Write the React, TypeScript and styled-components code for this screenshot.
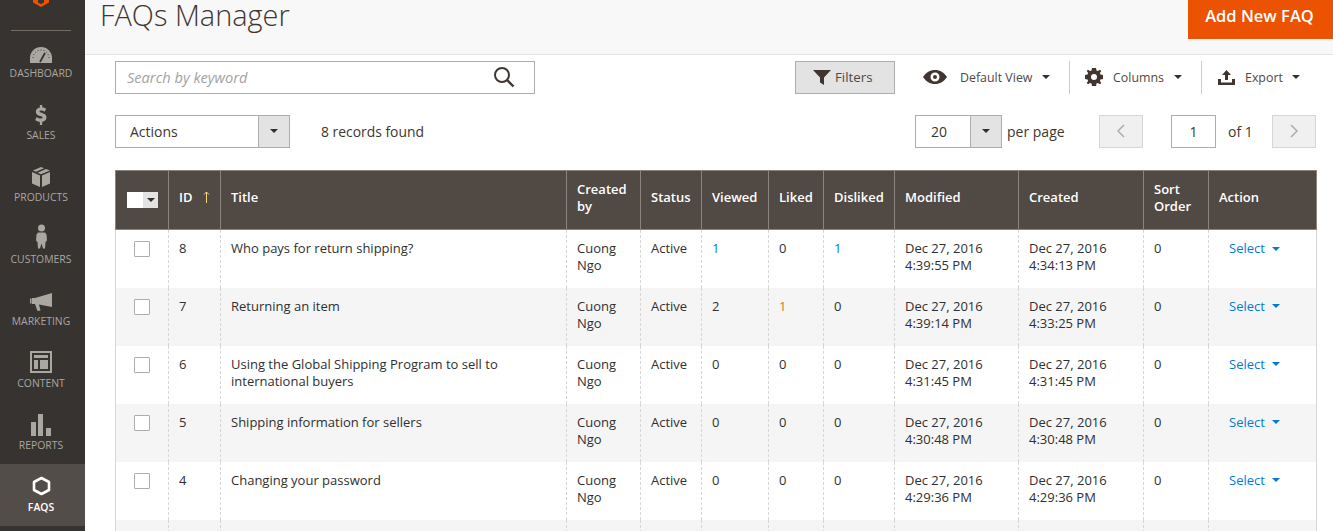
import React from 'react'
import styled, { createGlobalStyle } from 'styled-components'

const GlobalStyle = createGlobalStyle`
  html, body { margin: 0; padding: 0; background: #fff; }
  body { font-family: "Open Sans", "Noto Sans", sans-serif; font-size: 13px; color: #303030; }
  * { box-sizing: border-box; }
`

const Page = styled.div`
  display: flex;
  width: 1333px;
  height: 531px;
  overflow: hidden;
`

const Sidebar = styled.nav`
  width: 85px;
  flex: none;
  background: #373330;
  display: flex;
  flex-direction: column;
  align-items: center;
  overflow: hidden;
`

const LogoWrap = styled.div`
  height: 30px;
  width: 100%;
  flex: none;
  padding-right: 3px;
  display: flex;
  justify-content: center;
  align-items: flex-start;
`

const SideRule = styled.div`
  width: 60px;
  height: 1px;
  flex: none;
  background: #736d66;
  margin: 0 3px -1px 0;
`

const NavItem = styled.a<{ $active?: boolean }>`
  width: 100%;
  height: 62px;
  flex: none;
  display: flex;
  flex-direction: column;
  align-items: center;
  justify-content: flex-start;
  padding: 9px 3px 0 0;
  background: ${p => (p.$active ? '#524d49' : 'transparent')};
  color: ${p => (p.$active ? '#ffffff' : '#aaa6a0')};
  font-size: 10.4px;
  line-height: 14px;
  font-weight: ${p => (p.$active ? 600 : 400)};
  text-transform: uppercase;
  svg { height: 24px; width: 28px; display: block; margin-bottom: 3px; overflow: visible; }
`

const Main = styled.main`
  flex: 1;
  min-width: 0;
  display: flex;
  flex-direction: column;
`

const Header = styled.header`
  height: 55px;
  flex: none;
  background: #f8f8f8;
  border-bottom: 1px solid #e3e3e3;
  display: flex;
  justify-content: space-between;
  align-items: flex-start;
  padding-left: 15px;
`

const Title = styled.h1`
  margin: 0;
  font-size: 28.9px;
  line-height: 30px;
  font-weight: 300;
  color: #41362f;
`

const AddButton = styled.button`
  width: 145px;
  height: 39px;
  border: 0;
  background: #eb5202;
  color: #fff;
  font-family: inherit;
  font-size: 16.5px;
  font-weight: 600;
  padding: 0 2px 8px 0;
`

const Content = styled.div`
  padding: 5px 17px 0 30px;
`

const ToolRow = styled.div`
  display: flex;
  align-items: center;
  height: 34px;
`

const SearchBox = styled.div`
  width: 420px;
  height: 33px;
  border: 1px solid #adadad;
  display: flex;
  align-items: center;
  justify-content: space-between;
  padding: 0 19px 0 11px;
  font-style: italic;
  font-size: 14.6px;
  color: #a3a3a3;
`

const FiltersButton = styled.div`
  margin-left: 260px;
  width: 100px;
  height: 33px;
  background: #e3e3e3;
  border: 1px solid #adadad;
  display: flex;
  align-items: center;
  gap: 4px;
  padding-left: 17px;
  color: #514943;
  font-size: 13.3px;
`

const ToolMenu = styled.div<{ $width: number; $divider?: boolean }>`
  width: ${p => p.$width}px;
  height: 33px;
  flex: none;
  display: flex;
  align-items: center;
  font-size: 12.4px;
  color: #514943;
  border-left: ${p => (p.$divider ? '1px solid #cccccc' : '0')};
`

const MenuIcon = styled.svg<{ $left: number }>`
  margin-left: ${p => p.$left}px;
  flex: none;
`

const MenuLabel = styled.span<{ $left: number; $right: number }>`
  margin-left: ${p => p.$left}px;
  margin-right: ${p => p.$right}px;
`

const Caret = styled.span<{ $color?: string; $size?: number }>`
  display: inline-block;
  width: 0;
  height: 0;
  flex: none;
  border-left: ${p => p.$size ?? 4}px solid transparent;
  border-right: ${p => p.$size ?? 4}px solid transparent;
  border-top: ${p => p.$size ?? 4}px solid ${p => p.$color ?? '#303030'};
`

const PagerRow = styled.div`
  display: flex;
  align-items: center;
  height: 34px;
  margin-top: 20px;
`

const Select = styled.div<{ $width: number; $arrow: number }>`
  width: ${p => p.$width}px;
  height: 33px;
  flex: none;
  border: 1px solid #adadad;
  display: grid;
  grid-template-columns: 1fr ${p => p.$arrow}px;
  align-items: stretch;
  font-size: 14px;
  color: #41362f;
`

const SelectValue = styled.span<{ $pad: number }>`
  padding-left: ${p => p.$pad}px;
  line-height: 31px;
`

const SelectArrow = styled.span`
  background: #e3e3e3;
  border-left: 1px solid #adadad;
  display: flex;
  align-items: center;
  justify-content: center;
`

const Records = styled.span`
  margin-left: 31px;
  width: 594px;
  font-size: 13.9px;
  color: #41362f;
`

const PerPage = styled.span`
  margin-left: 5px;
  width: 92px;
  font-size: 14px;
  color: #41362f;
`

const PageArrow = styled.div`
  width: 44px;
  height: 33px;
  flex: none;
  background: #f0f0f0;
  border: 1px solid #d6d6d6;
  display: flex;
  align-items: center;
  justify-content: center;
  svg { width: 10px; height: 16px; }
`

const PageInput = styled.div`
  margin-left: 28px;
  width: 45px;
  height: 33px;
  flex: none;
  border: 1px solid #adadad;
  text-align: center;
  line-height: 31px;
  font-size: 14px;
  color: #41362f;
`

const PageOf = styled.span`
  margin-left: 12px;
  width: 44px;
  font-size: 14px;
  color: #41362f;
`

const Grid = styled.table`
  margin-top: 22px;
  width: 1201px;
  table-layout: fixed;
  border-collapse: collapse;
  font-size: 13px;
  line-height: 17px;
  border-left: 1px solid #d6d6d6;
  border-right: 1px solid #d6d6d6;
`

const Th = styled.th`
  height: 59px;
  background: #514943;
  color: #fff;
  font-size: 13px;
  font-weight: 600;
  text-align: left;
  vertical-align: middle;
  padding: 0 10px 5px;
  border: 1px solid #8a837e;
`

const Row = styled.tr<{ $odd: boolean }>`
  background: ${p => (p.$odd ? '#f5f5f5' : '#ffffff')};
`

const Td = styled.td<{ $tone?: 'blue' | 'orange' }>`
  height: 58px;
  padding: 10px 10px 0;
  vertical-align: top;
  border-left: 1px dashed #d6d6d6;
  color: ${p => (p.$tone === 'blue' ? '#007bdb' : p.$tone === 'orange' ? '#d87a1a' : '#303030')};
`

const CheckCell = styled(Td)`
  padding: 11px 0 0 18px;
`

const Check = styled.span`
  display: block;
  width: 16px;
  height: 16px;
  background: #fff;
  border: 1px solid #adadad;
  border-radius: 1px;
`

const HeadCheck = styled.div`
  display: flex;
  width: 31px;
  height: 16px;
  margin: 4px 0 0 1px;
`

const HeadCheckBox = styled.span`
  width: 16px;
  background: #fff;
`

const HeadCheckArrow = styled.span`
  flex: 1;
  background: #e3e3e3;
  display: flex;
  align-items: center;
  justify-content: center;
`

const SortMark = styled.svg`
  margin-left: 10px;
  vertical-align: -1px;
`

const SelectLink = styled.a`
  color: #007bdb;
  display: inline-flex;
  align-items: center;
  gap: 7px;
  margin-left: 10px;
`

const columns = [53, 52, 346, 74, 61, 67, 55, 71, 124, 125, 65, 108]

type Faq = {
  id: number
  title: string
  viewed: number
  liked: number
  disliked: number
  modified: string
  created: string
}

const rows: Faq[] = [
  { id: 8, title: 'Who pays for return shipping?', viewed: 1, liked: 0, disliked: 1, modified: '4:39:55 PM', created: '4:34:13 PM' },
  { id: 7, title: 'Returning an item', viewed: 2, liked: 1, disliked: 0, modified: '4:39:14 PM', created: '4:33:25 PM' },
  { id: 6, title: 'Using the Global Shipping Program to sell to international buyers', viewed: 0, liked: 0, disliked: 0, modified: '4:31:45 PM', created: '4:31:45 PM' },
  { id: 5, title: 'Shipping information for sellers', viewed: 0, liked: 0, disliked: 0, modified: '4:30:48 PM', created: '4:30:48 PM' },
  { id: 4, title: 'Changing your password', viewed: 0, liked: 0, disliked: 0, modified: '4:29:36 PM', created: '4:29:36 PM' },
]

const navItems = [
  {
    label: 'Dashboard',
    icon: (
      <svg viewBox="0 0 28 24">
        <path fill="currentColor" d="M3 24v-5a11 11 0 0122 0v5z" />
        <path stroke="#373330" strokeWidth="1.800" d="M13 23l5-9" />
        <path stroke="#373330" strokeWidth="1" strokeDasharray="1 2" fill="none" d="M6 19a8 8 0 0116 0" />
      </svg>
    ),
  },
  {
    label: 'Sales',
    icon: (
      <svg viewBox="0 0 28 24">
        <g transform="translate(3.100 4) scale(.78 .83)">
          <path fill="currentColor" d="M12.500 0h3v2.700c2 .2 3.600.8 5 1.700l-1.700 3.700c-1.500-1-3-1.500-4.700-1.500-1.300 0-2 .4-2 1.100 0 .8.900 1.100 3.300 1.800 3.600 1 5.600 2.400 5.600 5.400 0 2.900-1.900 4.800-5.500 5.300V24h-3v-3.700c-2.400-.2-4.400-1-6-2.300l2-3.600c1.700 1.300 3.600 2 5.300 2 1.400 0 2.200-.4 2.200-1.200s-.8-1.200-3-1.800c-3.700-1-5.700-2.300-5.700-5.300 0-2.800 2-4.700 5.200-5.200z" />
        </g>
      </svg>
    ),
  },
  {
    label: 'Products',
    icon: (
      <svg viewBox="0 0 28 24">
        <path fill="currentColor" d="M5 9l8 3.500V24l-8-3.500zM15 12.500L23 9v11.500L15 24zM14 4l3 1.200-8 3.500-3-1.300zM19 6l4 1.500-9 3.700-3.500-1.400z" />
      </svg>
    ),
  },
  {
    label: 'Customers',
    icon: (
      <svg viewBox="0 0 28 24">
        <circle cx="14.500" cy="3" r="3.500" fill="currentColor" />
        <path fill="currentColor" d="M11 7.500h7l1.500 2 .5 6-1.500 1.500-.5 6.500h-2l-1.500-5-1.500 5h-2l-.5-6.500L9 15.500l.5-6z" />
      </svg>
    ),
  },
  {
    label: 'Marketing',
    icon: (
      <svg viewBox="0 0 28 24">
        <path fill="currentColor" d="M25 6v14L12 17.500l1.500 6-3 .5-2.500-7H5V11h3zM3 11.500h1.500v5H3z" />
      </svg>
    ),
  },
  {
    label: 'Content',
    icon: (
      <svg viewBox="0 0 28 24">
        <path fill="currentColor" fillRule="evenodd" d="M3 2h22v22H3zM5 4v18h18V4zM7 6h14v3H7zM7 11h4v9H7zM13 11h8v9h-8z" />
      </svg>
    ),
  },
  {
    label: 'Reports',
    icon: (
      <svg viewBox="0 0 28 24">
        <path fill="currentColor" d="M4 11h5v14H4zM11 3h5v22h-5zM19 17h5v8h-5z" />
      </svg>
    ),
  },
]

function App() {
  return (
    <Page>
      <GlobalStyle />
      <Sidebar>
        <LogoWrap>
          <svg width="16" height="7" viewBox="0 0 16 7">
            <path fill="#eb5202" d="M0 0h5v2.500l3 1.500 3-1.500V0h5v2.500L8 7 0 2.500z" />
          </svg>
        </LogoWrap>
        <SideRule />
        {navItems.map(item => (
          <NavItem key={item.label}>
            {item.icon}
            {item.label}
          </NavItem>
        ))}
        <NavItem $active>
          <svg viewBox="0 0 28 24">
            <path fill="none" stroke="currentColor" strokeWidth="2.600" strokeLinejoin="round" d="M14.500 5L22 9v8l-7.500 4L7 17V9z" />
          </svg>
          FAQs
        </NavItem>
      </Sidebar>
      <Main>
        <Header>
          <Title>FAQs Manager</Title>
          <AddButton>Add New FAQ</AddButton>
        </Header>
        <Content>
          <ToolRow>
            <SearchBox>
              Search by keyword
              <svg width="22" height="22" viewBox="0 0 22 22">
                <circle cx="9" cy="9" r="7" fill="none" stroke="#41362f" strokeWidth="2" />
                <path d="M14 14l6.500 6.500" stroke="#41362f" strokeWidth="2.400" />
              </svg>
            </SearchBox>
            <FiltersButton>
              <svg width="18" height="15" viewBox="0 0 18 15">
                <path fill="#41362f" d="M0 0h18l-7 7.500V15l-4-2.500v-5z" />
              </svg>
              Filters
            </FiltersButton>
            <ToolMenu $width={174}>
              <MenuIcon $left={28} width="24" height="14" viewBox="0 0 24 14">
                <path fill="#41362f" fillRule="evenodd" d="M0 7c3-4.500 7-7 12-7s9 2.500 12 7c-3 4.500-7 7-12 7S3 11.500 0 7zm12 4.500a4.500 4.500 0 100-9 4.500 4.500 0 000 9zm0-2.500a2 2 0 110-4 2 2 0 010 4z" />
              </MenuIcon>
              <MenuLabel $left={13} $right={10}>Default View</MenuLabel>
              <Caret $size={4.500} />
            </ToolMenu>
            <ToolMenu $width={132} $divider>
              <MenuIcon $left={15} width="18" height="18" viewBox="0 0 18 18">
                <path fill="#41362f" fillRule="evenodd" d="M7 0h4l.5 2.500 1.400.6L15 1.700 16.300 3l-1.400 2.100.6 1.400L18 7v4l-2.500.5-.6 1.400 1.400 2.100-1.300 1.300-2.100-1.400-1.400.6L11 18H7l-.5-2.500-1.400-.6L3 16.300 1.700 15l1.400-2.100-.6-1.400L0 11V7l2.500-.5.6-1.400L1.700 3 3 1.700l2.100 1.400 1.400-.6zM9 12a3 3 0 100-6 3 3 0 000 6z" />
              </MenuIcon>
              <MenuLabel $left={10} $right={10}>Columns</MenuLabel>
              <Caret $size={4.500} />
            </ToolMenu>
            <ToolMenu $width={110} $divider>
              <MenuIcon $left={16} width="17" height="15" viewBox="0 0 17 15">
                <path fill="#41362f" d="M8.500 0l4.500 5H10v5H7V5H4zM0 9h3v3.500h11V9h3v6H0z" />
              </MenuIcon>
              <MenuLabel $left={10} $right={9}>Export</MenuLabel>
              <Caret $size={4.500} />
            </ToolMenu>
          </ToolRow>
          <PagerRow>
            <Select $width={175} $arrow={31}>
              <SelectValue $pad={14}>Actions</SelectValue>
              <SelectArrow><Caret /></SelectArrow>
            </Select>
            <Records>8 records found</Records>
            <Select $width={87} $arrow={31}>
              <SelectValue $pad={15}>20</SelectValue>
              <SelectArrow><Caret /></SelectArrow>
            </Select>
            <PerPage>per page</PerPage>
            <PageArrow>
              <svg viewBox="0 0 10 16"><path d="M8 2L2 8l6 6" fill="none" stroke="#adadad" strokeWidth="1.500" /></svg>
            </PageArrow>
            <PageInput>1</PageInput>
            <PageOf>of 1</PageOf>
            <PageArrow>
              <svg viewBox="0 0 10 16"><path d="M2 2l6 6-6 6" fill="none" stroke="#adadad" strokeWidth="1.500" /></svg>
            </PageArrow>
          </PagerRow>
          <Grid>
            <colgroup>
              {columns.map((width, i) => (
                <col key={i} width={width} />
              ))}
            </colgroup>
            <thead>
              <tr>
                <Th>
                  <HeadCheck>
                    <HeadCheckBox />
                    <HeadCheckArrow><Caret $size={4.500} /></HeadCheckArrow>
                  </HeadCheck>
                </Th>
                <Th>
                  ID
                  <SortMark width="7" height="12" viewBox="0 0 7 12">
                    <path d="M3.500 12V1M1 3.500L3.500 1 6 3.500" fill="none" stroke="#f5d97a" strokeWidth="1" />
                  </SortMark>
                </Th>
                <Th>Title</Th>
                <Th>Created by</Th>
                <Th>Status</Th>
                <Th>Viewed</Th>
                <Th>Liked</Th>
                <Th>Disliked</Th>
                <Th>Modified</Th>
                <Th>Created</Th>
                <Th>Sort Order</Th>
                <Th>Action</Th>
              </tr>
            </thead>
            <tbody>
              {rows.map((row, i) => (
                <Row key={row.id} $odd={i % 2 === 1}>
                  <CheckCell><Check /></CheckCell>
                  <Td>{row.id}</Td>
                  <Td>{row.title}</Td>
                  <Td>Cuong Ngo</Td>
                  <Td>Active</Td>
                  <Td $tone={row.viewed === 1 ? 'blue' : undefined}>{row.viewed}</Td>
                  <Td $tone={row.liked ? 'orange' : undefined}>{row.liked}</Td>
                  <Td $tone={row.disliked ? 'blue' : undefined}>{row.disliked}</Td>
                  <Td>Dec 27, 2016<br />{row.modified}</Td>
                  <Td>Dec 27, 2016<br />{row.created}</Td>
                  <Td>0</Td>
                  <Td>
                    <SelectLink>Select <Caret $color="#007bdb" /></SelectLink>
                  </Td>
                </Row>
              ))}
              <Row $odd>
                {columns.map((_, i) => (
                  <Td key={i} />
                ))}
              </Row>
            </tbody>
          </Grid>
        </Content>
      </Main>
    </Page>
  )
}

export default App
